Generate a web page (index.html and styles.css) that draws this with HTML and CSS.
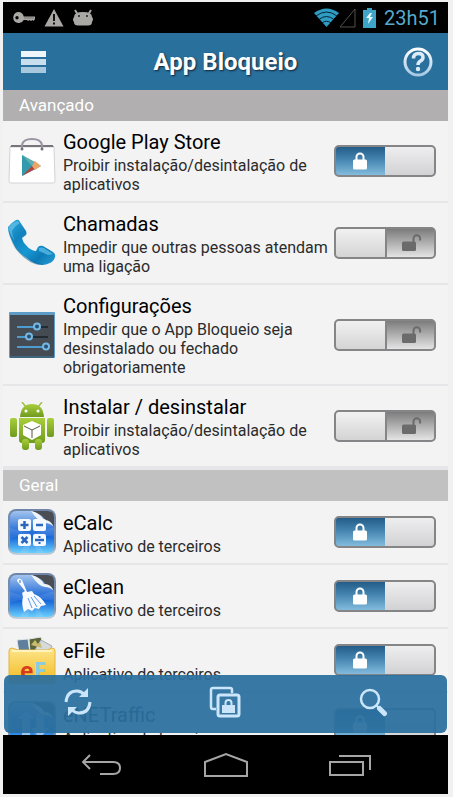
FILE: index.html
```html
<!DOCTYPE html>
<html lang="pt-BR">

<head>
    <meta charset="UTF-8">
    <meta name="viewport" content="width=device-width, initial-scale=1.0">
    <title>App Bloqueio</title>
    <link rel="stylesheet" href="styles.css">
</head>

<body>
    <!-- shared icons and gradients -->
    <svg class="defs" aria-hidden="true">
        <defs>
            <linearGradient id="silver" x1="0" y1="0" x2="0" y2="1">
                <stop offset="0" stop-color="#ffffff"/>
                <stop offset="1" stop-color="#a9c8e4"/>
            </linearGradient>
            <linearGradient id="glass" x1="0" y1="0" x2="0" y2="1">
                <stop offset="0" stop-color="#a3c4ee"/>
                <stop offset=".4" stop-color="#3b7ddc"/>
                <stop offset=".6" stop-color="#1263d6"/>
                <stop offset="1" stop-color="#6bd0fd"/>
            </linearGradient>
            <linearGradient id="rim" x1="0" y1="0" x2="0" y2="1">
                <stop offset="0" stop-color="#6f86a8"/>
                <stop offset=".8" stop-color="#8296b0"/>
                <stop offset="1" stop-color="#c9d4df"/>
            </linearGradient>
            <linearGradient id="phoneBlue" x1="0" y1="0" x2="1" y2="1">
                <stop offset="0" stop-color="#2fa9dc"/>
                <stop offset=".3" stop-color="#1182bd"/>
                <stop offset=".55" stop-color="#1798d3"/>
                <stop offset=".75" stop-color="#0d7ab6"/>
                <stop offset="1" stop-color="#26a0d6"/>
            </linearGradient>
            <linearGradient id="droid" x1="0" y1="0" x2="0" y2="1">
                <stop offset="0" stop-color="#a9cf3b"/>
                <stop offset="1" stop-color="#6f9a1e"/>
            </linearGradient>
            <linearGradient id="folder" x1="0" y1="0" x2="0" y2="1">
                <stop offset="0" stop-color="#fde58a"/>
                <stop offset="1" stop-color="#f2b91f"/>
            </linearGradient>
        </defs>
        <symbol id="lock" viewBox="0 0 14 18">
            <path d="M3.500 8V5a3.500 3.500 0 0 1 7 0v3" fill="none" stroke="currentColor" stroke-width="2"/>
            <rect x="0" y="7.500" width="14" height="10" rx="1.500" fill="currentColor"/>
        </symbol>
        <symbol id="unlock" viewBox="0 0 20 18">
            <path d="M11.500 8V4.500a3.300 3.300 0 0 1 6.600 0v2" fill="none" stroke="currentColor" stroke-width="2"/>
            <rect x="0" y="7.500" width="14" height="9.500" rx="1.500" fill="currentColor"/>
        </symbol>
        <symbol id="tile" viewBox="0 0 48 48">
            <rect x="0" y="1" width="48" height="46" rx="8" fill="url(#rim)"/>
            <rect x="2" y="3" width="44" height="42" rx="6" fill="url(#glass)"/>
            <path d="M24 26L2 20v10zM24 26l22-7v10zM24 26L12 45h8zM24 26l12 19h-7z" fill="#fff" opacity=".1"/>
            <path d="M24 3h16q6 0 6 6v11q-3-6-8-6-2-7-14-11z" fill="#4a4e54"/>
            <path d="M23 3q9 2 13 9 6-1 10 7-4-4-9-4-6 0-14-12z" fill="#eef3f7"/>
        </symbol>
    </svg>

    <div class="phone">
        <div class="status-bar">
            <div class="status-icons">
                <svg width="23" height="14" viewBox="0 0 23 14">
                    <path fill-rule="evenodd" d="M6 1a5.500 5.500 0 1 0 4.700 8H14l1 1 1.500-1 1.500 1 1.500-1 1 1 1.500-2V5.500H10.700A5.500 5.500 0 0 0 6 1zM4 5a1.700 1.700 0 1 1 0 3.400A1.700 1.700 0 0 1 4 5z" fill="#aaa8a4"/>
                    <path d="M11 7h10" stroke="#77756f"/>
                </svg>
                <svg width="20" height="19" viewBox="0 0 20 19">
                    <path d="M10 1l9.500 17.500H.5z" fill="#aaa8a4"/>
                    <path d="M10 6v7M10 14.500v2" stroke="#111" stroke-width="2"/>
                </svg>
                <svg width="22" height="18" viewBox="0 0 22 18">
                    <path d="M3 1l3 5M19 1l-3 5" stroke="#aaa8a4" stroke-width="2"/>
                    <path d="M2 8q0-5 9-5t9 5q2 2 0 5 0 4-5 3.500H7Q2 17 2 13q-2-2 0-5z" fill="#aaa8a4"/>
                    <circle cx="7" cy="7" r="1" fill="#222"/>
                    <circle cx="15" cy="7" r="1" fill="#222"/>
                </svg>
            </div>
            <div class="status-right">
                <svg width="25" height="20" viewBox="0 0 25 20">
                    <path d="M12.500 19L0 5Q12.500-4 25 5z" fill="#2f9cc4"/>
                    <path d="M2 8q10.500-8 21 0M5 11.500q7.500-6 15 0M8 15q4.500-3.500 9 0" fill="none" stroke="#062430"/>
                </svg>
                <svg width="17" height="20" viewBox="0 0 17 20">
                    <path d="M16 1v18H1z" fill="none" stroke="#55504b"/>
                </svg>
                <svg class="battery" width="13" height="20" viewBox="0 0 13 20">
                    <path d="M4 0h5v2h4v18H0V2h4z" fill="#3ea4c8"/>
                    <path d="M7 5L3 10h3l-1 6 5-7H7l2-4z" fill="#e9f8ff"/>
                </svg>
                <time>23h51</time>
            </div>
        </div>

        <header class="app-header">
            <button class="icon-btn" aria-label="Menu">
                <svg width="25" height="22" viewBox="0 0 25 22">
                    <rect width="25" height="6" fill="#eef6fc"/>
                    <rect y="8" width="25" height="6" fill="#c9dfee"/>
                    <rect y="16" width="25" height="6" fill="#a8c8de"/>
                </svg>
            </button>
            <h1>App Bloqueio</h1>
            <button class="icon-btn" aria-label="Ajuda">
                <svg width="32" height="32" viewBox="0 0 32 32">
                    <circle cx="16" cy="16" r="13" fill="none" stroke="url(#silver)" stroke-width="3"/>
                    <path d="M11.500 12.500q0-5 5-5 4.500 0 4.500 4 0 2-2.500 3.500-2.500 1.500-2.500 4" fill="none" stroke="#dcebf7" stroke-width="3.500"/>
                    <circle cx="16" cy="23" r="2.200" fill="#dcebf7"/>
                </svg>
            </button>
        </header>

        <main class="content">
            <h2 class="section-title">Avançado</h2>
            <ul class="app-list">
                <li class="app-row">
                    <svg class="app-icon" viewBox="0 0 48 48">
                        <path d="M2 9h44v1H2z" fill="#77747b"/>
                        <path d="M2 10h44l1 34q0 2-2 2H3q-2 0-2-2z" fill="#fff" stroke="#d5d2d6"/>
                        <path d="M3 9h42" stroke="#77747b" stroke-width="2"/>
                        <path d="M14 12V8q1-6 10-6t10 6v4" fill="none" stroke="#9c94a0" stroke-width="2"/>
                        <circle cx="14" cy="12" r="1.500" fill="#766e7a"/>
                        <circle cx="34" cy="12" r="1.500" fill="#766e7a"/>
                        <path d="M14 18v21l19-10z" fill="#319bab"/>
                        <path d="M14 18l13 7-3 4z" fill="#60aeb5"/>
                        <path d="M24 29l-10 10 13-7z" fill="#b5433f"/>
                        <path d="M24 29l3-5 6 5-6 4z" fill="#eda567"/>
                    </svg>
                    <label class="app-text" for="play">
                        <span class="app-name">Google Play Store</span>
                        <span class="app-desc">Proibir instalação/desintalação de aplicativos</span>
                    </label>
                    <span class="toggle">
                        <input type="checkbox" id="play" checked>
                        <svg class="on"><use href="#lock"/></svg>
                        <svg class="off"><use href="#unlock"/></svg>
                    </span>
                </li>
                <li class="app-row">
                    <svg class="app-icon" viewBox="0 0 48 48">
                        <path d="M0 8q3-4 8-7 3-1 4 2l6 9q1 2 0 4l-4 3q1 4 3 6 3 4 7 6 2 1 4 1l2-4q2-2 5-1l10 6q3 2 2 5-1 4-5 6-4 2-8 2-8-1-15-7Q9 33 5 24 0 15 0 8z" fill="url(#phoneBlue)"/>
                        <path d="M1 8q3-4 8-6l3 2q-4 2-8 8 0 4 3 10-6-8-6-14z" fill="#7fd3f3" opacity=".5"/>
                        <path d="M31 29q2-1 5 0l9 6-5 1-9-4z" fill="#6fcdf2" opacity=".6"/>
                        <path d="M3 21q7 13 18 19 7 5 15 5-8 3-18-5Q7 32 3 21z" fill="#075b92" opacity=".5"/>
                    </svg>
                    <label class="app-text" for="calls">
                        <span class="app-name">Chamadas</span>
                        <span class="app-desc">Impedir que outras pessoas atendam uma ligação</span>
                    </label>
                    <span class="toggle">
                        <input type="checkbox" id="calls">
                        <svg class="on"><use href="#lock"/></svg>
                        <svg class="off"><use href="#unlock"/></svg>
                    </span>
                </li>
                <li class="app-row">
                    <svg class="app-icon" viewBox="0 0 48 48">
                        <rect x="1" y="1" width="46" height="46" rx="1" fill="#5c9cc6"/>
                        <rect x="2" y="4" width="44" height="41" fill="#454b52"/>
                        <path d="M2 45h44v2H2z" fill="#40657f"/>
                        <path d="M9 16h31M9 26h31M9 36h31" stroke="#232b32" stroke-width="2"/>
                        <path d="M9 16h20M9 26h12M9 36h28" stroke="#4f9dd0" stroke-width="2"/>
                        <g fill="#284f6e" stroke="#75b8e5" stroke-width="2">
                            <circle cx="29" cy="15.500" r="3"/>
                            <circle cx="21" cy="25.500" r="3"/>
                            <circle cx="38" cy="35.500" r="3"/>
                        </g>
                    </svg>
                    <label class="app-text" for="settings">
                        <span class="app-name">Configurações</span>
                        <span class="app-desc">Impedir que o App Bloqueio seja desinstalado ou fechado obrigatoriamente</span>
                    </label>
                    <span class="toggle">
                        <input type="checkbox" id="settings">
                        <svg class="on"><use href="#lock"/></svg>
                        <svg class="off"><use href="#unlock"/></svg>
                    </span>
                </li>
                <li class="app-row">
                    <svg class="app-icon" viewBox="0 0 48 48">
                        <path d="M18 5l-4-5M30 5l4-5" stroke="#9fc043" stroke-width="1.500"/>
                        <g fill="url(#droid)">
                            <path d="M12 15Q13 2 24 2t12 13z"/>
                            <path d="M11 16h26v22q0 3-3 3H14q-3 0-3-3z"/>
                            <rect x="2" y="16" width="7" height="19" rx="2"/>
                            <rect x="39" y="16" width="7" height="19" rx="2"/>
                            <rect x="14" y="37" width="7" height="11" rx="3"/>
                            <rect x="27" y="37" width="7" height="11" rx="3"/>
                        </g>
                        <circle cx="18" cy="9" r="1.500" fill="#fff"/>
                        <circle cx="30" cy="9" r="1.500" fill="#fff"/>
                        <path d="M24 19l9 4v10l-9 5-9-5V23z" fill="#fff"/>
                        <path d="M16 24l8 4 8-4M24 28v8" fill="none" stroke="#4f5d40"/>
                    </svg>
                    <label class="app-text" for="install">
                        <span class="app-name">Instalar / desinstalar</span>
                        <span class="app-desc">Proibir instalação/desintalação de aplicativos</span>
                    </label>
                    <span class="toggle">
                        <input type="checkbox" id="install">
                        <svg class="on"><use href="#lock"/></svg>
                        <svg class="off"><use href="#unlock"/></svg>
                    </span>
                </li>
            </ul>

            <h2 class="section-title general">Geral</h2>
            <ul class="app-list">
                <li class="app-row">
                    <svg class="app-icon" viewBox="0 0 48 48">
                        <use href="#tile"/>
                        <g fill="#f4f9ff">
                            <rect x="10" y="11" width="13" height="12" rx="2"/>
                            <rect x="25" y="11" width="13" height="12" rx="2"/>
                            <rect x="10" y="26" width="13" height="12" rx="2"/>
                            <rect x="25" y="26" width="13" height="12" rx="2"/>
                        </g>
                        <path d="M16.500 13v8M12.500 17h8M28 17h7M13.500 29l6 6M19.500 29l-6 6M27 32h9" stroke="#2a66bd" stroke-width="2.500"/>
                        <path d="M30.500 28h2v2h-2zM30.500 34h2v2h-2z" fill="#1f62c4"/>
                    </svg>
                    <label class="app-text" for="ecalc">
                        <span class="app-name">eCalc</span>
                        <span class="app-desc">Aplicativo de terceiros</span>
                    </label>
                    <span class="toggle">
                        <input type="checkbox" id="ecalc" checked>
                        <svg class="on"><use href="#lock"/></svg>
                        <svg class="off"><use href="#unlock"/></svg>
                    </span>
                </li>
                <li class="app-row">
                    <svg class="app-icon" viewBox="0 0 48 48">
                        <use href="#tile"/>
                        <path d="M9 8q2-3 5 0l5 12 5-1 2 3q8 3 12 11l-5 1-2 3-4-1-3 3-4-2-4 3q-3-9-1-15l-1-4 3-2-8-10z" fill="#f7fbff"/>
                        <path d="M20 26l4 10M23 25l6 10M26 24l7 8" stroke="#5a9ae6"/>
                        <path d="M12 8v3" stroke="#2b72d6"/>
                    </svg>
                    <label class="app-text" for="eclean">
                        <span class="app-name">eClean</span>
                        <span class="app-desc">Aplicativo de terceiros</span>
                    </label>
                    <span class="toggle">
                        <input type="checkbox" id="eclean" checked>
                        <svg class="on"><use href="#lock"/></svg>
                        <svg class="off"><use href="#unlock"/></svg>
                    </span>
                </li>
                <li class="app-row">
                    <svg class="app-icon" viewBox="0 0 48 48">
                        <path d="M9 4l11-1 2 14H11z" fill="#607f9c" stroke="#e2e6e8"/>
                        <path d="M21 3l12-2 3 14-14 2z" fill="#5a6639" stroke="#e2e6e8"/>
                        <path d="M33 4l11 6-6 10-11-6z" fill="#d6dadb" stroke="#a5adb2"/>
                        <path d="M23 9l4-5 3 4 2-2 2 6z" fill="#c7b96e"/>
                        <path d="M1 15q0-3 3-3l6 2h29l5-2q3 0 3 3v30q0 3-3 3H4q-3 0-3-3z" fill="url(#folder)" stroke="#e3b544"/>
                        <path d="M4 15h40" stroke="#fff3bd" stroke-width="2"/>
                        <text x="12" y="43"><tspan class="logo-e">e</tspan><tspan class="logo-f">F</tspan></text>
                    </svg>
                    <label class="app-text" for="efile">
                        <span class="app-name">eFile</span>
                        <span class="app-desc">Aplicativo de terceiros</span>
                    </label>
                    <span class="toggle">
                        <input type="checkbox" id="efile" checked>
                        <svg class="on"><use href="#lock"/></svg>
                        <svg class="off"><use href="#unlock"/></svg>
                    </span>
                </li>
                <li class="app-row">
                    <svg class="app-icon" viewBox="0 0 48 48">
                        <use href="#tile"/>
                        <path d="M14 36V19h-5l9-9 9 9h-5v17zM28 14h8v14h5l-9 10-9-10h5z" fill="#9cc6f2"/>
                    </svg>
                    <label class="app-text" for="enet">
                        <span class="app-name">eNETraffic</span>
                        <span class="app-desc">Aplicativo de terceiros</span>
                    </label>
                    <span class="toggle">
                        <input type="checkbox" id="enet" checked>
                        <svg class="on"><use href="#lock"/></svg>
                        <svg class="off"><use href="#unlock"/></svg>
                    </span>
                </li>
            </ul>

            <!-- floating toolbar over the end of the list -->
            <div class="toolbar">
                <button aria-label="Atualizar">
                    <svg width="30" height="30" viewBox="0 0 30 30">
                        <path d="M3 15Q4 4 14 4q4 0 8 4M27 15q-1 11-11 11-4 0-8-4" fill="none" stroke="#cbe6fa" stroke-width="3"/>
                        <path d="M25 1v9h-9zM5 29v-9h9z" fill="#cbe6fa"/>
                    </svg>
                </button>
                <button aria-label="Bloquear tudo">
                    <svg width="32" height="32" viewBox="0 0 32 32">
                        <path d="M7 23H4q-2 0-2-2V4q0-2 2-2h17q2 0 2 2v3" fill="none" stroke="#cbe6fa" stroke-width="2.500"/>
                        <rect x="9" y="9" width="21" height="21" rx="2" fill="none" stroke="#cbe6fa" stroke-width="3"/>
                        <path d="M16.500 20v-3q0-3 3-3t3 3v3" fill="none" stroke="#cbe6fa" stroke-width="2"/>
                        <rect x="13" y="19" width="13" height="8" fill="#cbe6fa"/>
                    </svg>
                </button>
                <button aria-label="Pesquisar">
                    <svg width="30" height="30" viewBox="0 0 30 30">
                        <circle cx="12" cy="12" r="9" fill="none" stroke="#cbe6fa" stroke-width="2.500"/>
                        <path d="M18.500 18.500l3 3" stroke="#cbe6fa" stroke-width="2"/>
                        <path d="M21.500 21.500l5 5" stroke="#cbe6fa" stroke-width="5" stroke-linecap="round"/>
                    </svg>
                </button>
            </div>
        </main>

        <nav class="nav-bar">
            <button aria-label="Voltar">
                <svg width="42" height="24" viewBox="0 0 42 24">
                    <path d="M9 2L2 9l7 7M2 9h30q7 0 7 6t-7 6H19" fill="none" stroke="#a6a6a6" stroke-width="2"/>
                </svg>
            </button>
            <button aria-label="Início">
                <svg width="46" height="26" viewBox="0 0 46 26">
                    <path d="M2 24V10l21-8 21 8v14z" fill="none" stroke="#a6a6a6" stroke-width="2"/>
                </svg>
            </button>
            <button aria-label="Recentes">
                <svg width="44" height="24" viewBox="0 0 44 24">
                    <rect x="2" y="9" width="33" height="13" fill="none" stroke="#a6a6a6" stroke-width="2"/>
                    <path d="M11 3h31v14" fill="none" stroke="#a6a6a6" stroke-width="2"/>
                </svg>
            </button>
        </nav>
    </div>
</body>

</html>
```
FILE: styles.css
```css
* {
    box-sizing: border-box;
}

body {
    margin: 0;
    padding: 2px 5px 3px 3px;
    height: 100vh;
    font-family: Roboto, "Liberation Sans", sans-serif;
    background-color: #f1f1f2;
    color: #111;
}

button {
    padding: 0;
    border: none;
    background: none;
    cursor: pointer;
}

svg {
    display: block;
}

.defs {
    position: absolute;
    width: 0;
    height: 0;
}

.phone {
    display: flex;
    flex-direction: column;
    height: 100%;
    background-color: #f3f3f4;
}

/* android status bar */
.status-bar {
    display: flex;
    justify-content: space-between;
    align-items: center;
    height: 31px;
    padding: 0 8px 0 10px;
    background-color: #000;
    flex-shrink: 0;
}

.status-icons {
    display: flex;
    align-items: center;
    gap: 8px;
}

.status-right {
    display: flex;
    align-items: center;
    color: #57a9cb;
    font-size: 20px;
}

.battery {
    margin: 0 8px 0 7px;
}

.app-header {
    display: flex;
    justify-content: space-between;
    align-items: center;
    height: 57px;
    padding: 0 14px;
    background-color: #29709c;
    flex-shrink: 0;
}

.app-header h1 {
    margin: 0;
    color: #fff;
    font-size: 24px;
    font-weight: bold;
    text-shadow: 1px 1px 2px #123;
}

.icon-btn {
    display: flex;
    justify-content: center;
    align-items: center;
    width: 32px;
    height: 40px;
}

.content {
    position: relative;
    flex: 1;
    min-height: 0;
    overflow: hidden;
}

.section-title {
    margin: 0;
    padding: 0 16px;
    line-height: 31px;
    font-size: 17px;
    font-weight: normal;
    color: #fff;
    background-color: #b1afb0;
}

.general {
    border-top: 2px solid #e6e6e8;
    background-color: #c1c1c1;
}

.app-list {
    margin: 0;
    padding: 0;
    list-style: none;
}

.app-row {
    display: flex;
    align-items: center;
    padding: 7px 12px 7px 5px;
    border-bottom: 2px solid #e6e6e8;
}

.app-icon {
    width: 48px;
    height: 48px;
    margin-right: 7px;
    flex-shrink: 0;
}

.app-text {
    flex: 1;
    min-width: 0;
}

.app-name {
    display: block;
    font-size: 20px;
    line-height: 28px;
    color: #000;
}

.app-desc {
    display: block;
    font-size: 16px;
    line-height: 19px;
    color: #2b2b2b;
}

.logo-e,
.logo-f {
    font-family: "Open Sans", sans-serif;
    font-size: 23px;
    font-weight: bold;
}

.logo-e {
    fill: #d93a1c;
}

.logo-f {
    fill: #8ccbe8;
}

/* switch and its padlock share one grid cell */
.toggle {
    display: grid;
    width: 102px;
    height: 32px;
    flex-shrink: 0;
}

.toggle input,
.toggle svg {
    grid-area: 1 / 1;
}

.toggle input {
    appearance: none;
    margin: 0;
    border: 2px solid #858588;
    border-radius: 5px;
    background: linear-gradient(90deg, transparent 50%, #858588 50%, #858588 52%, transparent 52%),
        linear-gradient(#f1f1f1, #d4d4d5) left / 51% 100% no-repeat,
        linear-gradient(#7c7c7c, #e4e4e4);
    cursor: pointer;
}

.toggle input:checked {
    background: linear-gradient(#efeeef, #d2d1d3) right / 50% 100% no-repeat,
        linear-gradient(#235c88, #4585b0 45%, #82bbdd);
}

.toggle svg {
    align-self: center;
    pointer-events: none;
}

.toggle .on {
    display: none;
    width: 14px;
    height: 18px;
    margin-left: 19px;
    color: #fff;
}

.toggle .off {
    width: 20px;
    height: 18px;
    margin-left: 68px;
    color: #6b6b6b;
}

.toggle input:checked ~ .on {
    display: block;
}

.toggle input:checked ~ .off {
    display: none;
}

.toolbar {
    position: absolute;
    left: 1px;
    right: 1px;
    bottom: 2px;
    display: grid;
    grid-template-columns: repeat(3, 1fr);
    height: 58px;
    padding-bottom: 4px;
    border-radius: 6px;
    background-color: rgba(44, 112, 158, 0.94);
}

.toolbar button,
.nav-bar button {
    display: flex;
    justify-content: center;
    align-items: center;
}

.nav-bar {
    display: flex;
    justify-content: space-between;
    height: 59px;
    padding: 0 76px 0 78px;
    background-color: #000;
    flex-shrink: 0;
}
```
